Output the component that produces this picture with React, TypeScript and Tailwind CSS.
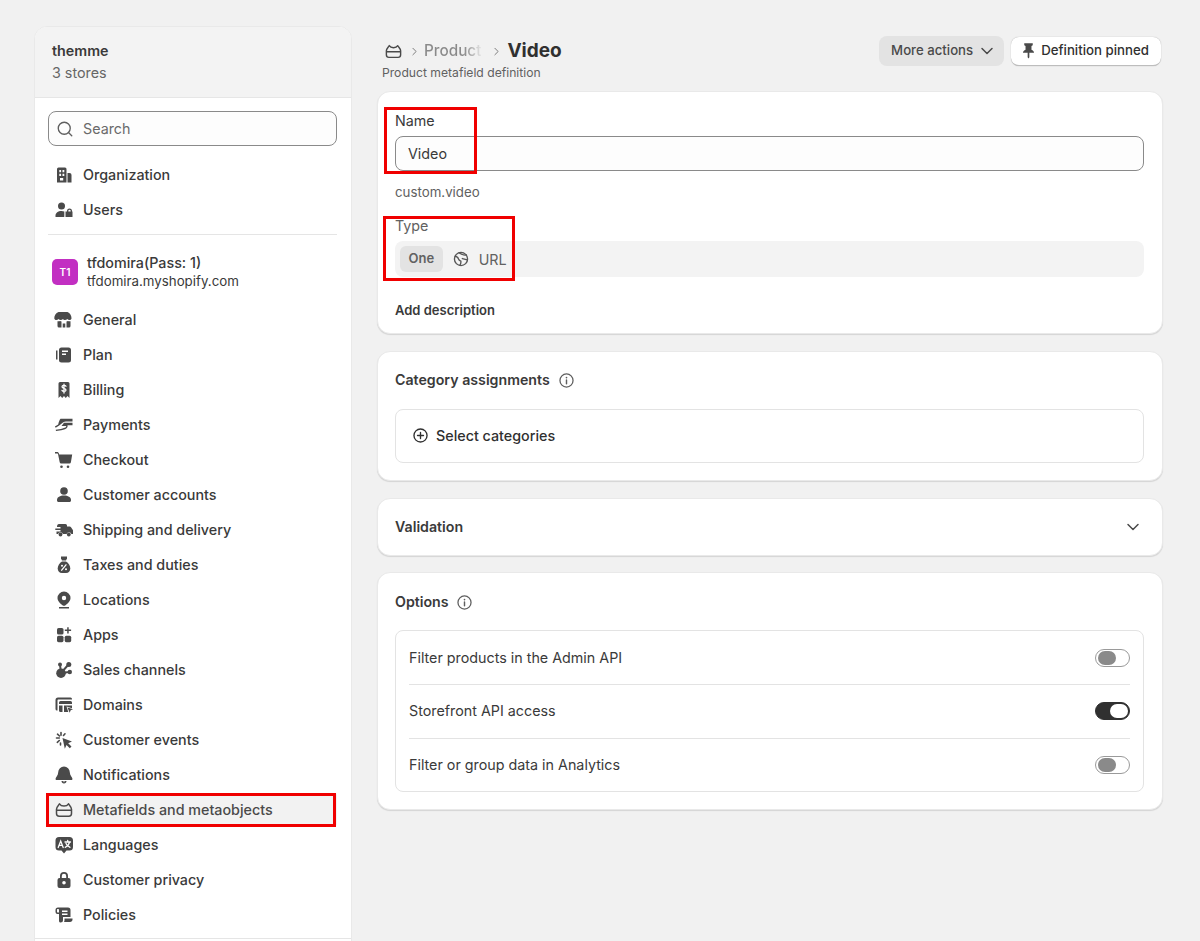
import type { ReactNode } from 'react'
import { ChevronDown, ChevronRight, Search } from 'lucide-react'

const Icon = ({ children, className = 'w-5 h-5 text-[#4a4a4a]' }: { children: ReactNode; className?: string }) => (
  <svg viewBox="0 0 20 20" fill="currentColor" className={className}>
    {children}
  </svg>
)

const MetafieldIcon = ({ className }: { className?: string }) => (
  <Icon className={className}>
    <path
      d="M5.500 3.800C5 5.300 2.500 6.800 2.500 9.300v4.200a2.700 2.700 0 0 0 2.700 2.700h9.600a2.700 2.700 0 0 0 2.700-2.700V9.300c0-2.500-2.500-4-3-5.500-1 1.600-2.500 2.200-4.500 2.200s-3.500-.6-4.500-2.200zM2.800 10.300h14.400"
      fill="none"
      stroke="currentColor"
      strokeWidth="1.500"
      strokeLinecap="round"
      strokeLinejoin="round"
    />
  </Icon>
)

const navTop = [
  {
    label: 'Organization',
    icon: (
      <Icon>
        <path
          fillRule="evenodd"
          d="M4.500 2.500h6.500A1.500 1.500 0 0 1 12.500 4v13.500H3V4A1.500 1.500 0 0 1 4.500 2.500M5.300 5v2.200h1.800V5zm3.200 0v2.200h1.800V5zM5.300 8.800V11h1.800V8.800zm3.200 0V11h1.800V8.800zM6 13v2.500h3.200V13z"
        />
        <path d="M13.500 8h2A2 2 0 0 1 17.500 10v7.500h-4z" />
      </Icon>
    ),
  },
  {
    label: 'Users',
    icon: (
      <Icon>
        <circle cx="7.500" cy="6" r="3.500" />
        <path d="M1.500 17v-1.500c0-2.500 2.500-4.500 6-4.500 1 0 2 .2 2.800.5V17z" />
        <path
          fillRule="evenodd"
          d="M13 11.500V11a2.500 2.500 0 0 1 5 0v.5h.5V17h-7v-5.500zm1.300 0h2.400V11a1.200 1.200 0 0 0-2.400 0z"
        />
      </Icon>
    ),
  },
]

const navMain = [
  {
    label: 'General',
    icon: (
      <Icon>
        <path d="M6.500 2h7c2.500 1 4 3.500 4 6.200 0 1.200-1 1.800-2 1.800s-1.700-.4-2.200-1c-.6.600-1.400 1-2.300 1s-1.700-.4-2-1c-.6.600-1.400 1-2.300 1s-1.700-.4-2.200-1c-.5.600-1.200 1-2.200 1s-2-.6-2-1.800c0-2.700 1.500-5.200 4.200-6.200" />
        <path d="M3.500 11.200c1 .3 2 .2 2.500-.2.500.3 1.200.5 1.500.5V17.500H5a1.500 1.500 0 0 1-1.500-1.500zM16.500 11.200V16A1.500 1.500 0 0 1 15 17.500h-2.500v-6c.3 0 1-.2 1.500-.5.500.4 1.500.5 2.500.2M8.700 13.500h2.600v4H8.700z" />
      </Icon>
    ),
  },
  {
    label: 'Plan',
    icon: (
      <Icon>
        <path d="M2 5.500h1.500v9H2z" />
        <path
          fillRule="evenodd"
          d="M7.500 2.500h7A2.500 2.500 0 0 1 17 5v10a2.500 2.500 0 0 1-2.500 2.500h-7A2.500 2.500 0 0 1 5 15V5A2.500 2.500 0 0 1 7.500 2.500M8 5.500V7h6V5.500zm0 3V10h4V8.500z"
        />
      </Icon>
    ),
  },
  {
    label: 'Billing',
    icon: (
      <Icon>
        <path
          fillRule="evenodd"
          d="M6 2h8A1.500 1.500 0 0 1 15.500 3.500v14.500l-2-2-1.700 2L10 16l-1.800 2-1.700-2-2 2V3.500A1.500 1.500 0 0 1 6 2"
        />
        <path
          d="M12 6.300c-.4-.7-1.100-1-2-1-1.200 0-2 .6-2 1.500 0 2 4 1.100 4 3.100 0 .9-.8 1.500-2 1.500-.9 0-1.700-.4-2-1M10 4.200v8.800"
          fill="none"
          stroke="#fff"
          strokeWidth="1.300"
          strokeLinecap="round"
        />
      </Icon>
    ),
  },
  {
    label: 'Payments',
    icon: (
      <Icon>
        <path d="M6.500 3.800h12V6.500H12c-1 0-2.200.3-3 1L5.200 10.500l-3.500 2.200-.8-1.100 3.300-2.200C4.700 7.500 5.500 5 6.500 3.800" />
        <path d="M10 7.800h8.500v2.500h-5c.5 1.600-.5 3.300-2.500 3.900l-3.700 1.100-5.300.700-.3-1.300 5.200-.8 3.800-1.100c1.200-.3 1.700-1 1.500-1.700H7.500z" />
      </Icon>
    ),
  },
  {
    label: 'Checkout',
    icon: (
      <Icon>
        <path d="M1 2H3c1 0 1.800.7 2 1.700l.2.800h13l-1.300 7.800a1.500 1.500 0 0 1-1.500 1.200H7.200a1.500 1.500 0 0 1-1.500-1.300L4 4c0-.3-.3-.5-.6-.5H1z" />
        <circle cx="7.500" cy="16.800" r="1.300" />
        <circle cx="14" cy="16.800" r="1.300" />
      </Icon>
    ),
  },
  {
    label: 'Customer accounts',
    icon: (
      <Icon>
        <circle cx="10" cy="6" r="3.800" />
        <path d="M3 15c0-2.800 3.100-4.500 7-4.500s7 1.700 7 4.500v.5c0 .8-.7 1.500-1.500 1.500h-11C3.700 17 3 16.300 3 15.500z" />
      </Icon>
    ),
  },
  {
    label: 'Shipping and delivery',
    icon: (
      <Icon>
        <path d="M5 4h6.500A1.500 1.500 0 0 1 13 5.500V6.500h2.700c.5 0 1 .3 1.300.7l1.700 2.500c.2.300.3.600.3.900V14h-1.600a2.500 2.500 0 0 0-4.800 0H8.900a2.500 2.500 0 0 0-4.800 0H2.500v-2.500h4V10H1.300V8.500h5.200V7H3c0-1.700.7-3 2-3" />
        <circle cx="6.500" cy="14.500" r="1.900" />
        <circle cx="14.800" cy="14.500" r="1.900" />
      </Icon>
    ),
  },
  {
    label: 'Taxes and duties',
    icon: (
      <Icon>
        <path d="M7 1.500h6v1.700l-1 2.300H8L7 3.200z" />
        <path
          fillRule="evenodd"
          d="M8 6.500h4c2.500 1.500 4.300 4.200 4.300 7 0 2.500-1.700 4.500-4.300 4.500H8c-2.600 0-4.300-2-4.300-4.500 0-2.800 1.800-5.500 4.300-7"
        />
        <path d="M12 9.800l-4.300 5.400" stroke="#fff" strokeWidth="1.300" strokeLinecap="round" />
        <circle cx="8" cy="10.800" r="1" fill="#fff" />
        <circle cx="12" cy="14.200" r="1" fill="#fff" />
      </Icon>
    ),
  },
  {
    label: 'Locations',
    icon: (
      <Icon>
        <path
          fillRule="evenodd"
          d="M10 1.500a6.500 6.500 0 0 1 6.500 6.500c0 3.200-2.900 5.800-5.300 7.500-.7.400-1.700.4-2.400 0C6.400 13.800 3.500 11.200 3.500 8A6.500 6.500 0 0 1 10 1.500m0 4.300a2.200 2.200 0 1 0 0 4.400 2.200 2.200 0 0 0 0-4.400"
        />
        <path d="M5 17h10v1.500H5z" />
      </Icon>
    ),
  },
  {
    label: 'Apps',
    icon: (
      <Icon>
        <rect x="3" y="3" width="6.500" height="6.500" rx="1.600" />
        <rect x="3" y="10.700" width="6.500" height="6.500" rx="1.600" />
        <rect x="10.700" y="10.700" width="6.500" height="6.500" rx="1.600" />
        <path d="M13.200 2.200h1.500v2.400h2.400v1.500h-2.400v2.400h-1.500V6.100h-2.400V4.600h2.400z" />
      </Icon>
    ),
  },
  {
    label: 'Sales channels',
    icon: (
      <Icon>
        <circle cx="7" cy="13.200" r="4.800" />
        <circle cx="14.800" cy="4.500" r="2.500" />
        <circle cx="6" cy="4.500" r="2" />
        <circle cx="15.800" cy="12" r="2.200" />
        <path d="M7 13L14.500 4.500M6 4.500L7 13M7 13l8.500-1" stroke="currentColor" strokeWidth="2" />
      </Icon>
    ),
  },
  {
    label: 'Domains',
    icon: (
      <Icon>
        <path d="M4 2.500h12.500A1.500 1.500 0 0 1 18 4v.5H4A1.500 1.500 0 0 0 3.500 5v10.500H3A1.500 1.500 0 0 1 1.500 14V5A2.500 2.500 0 0 1 4 2.500" />
        <path d="M6.500 6h10A1.500 1.500 0 0 1 18 7.500V9H5V7.500A1.500 1.500 0 0 1 6.500 6M5 10.500h3.500V17h-2A1.500 1.500 0 0 1 5 15.500zM10 10.500h8v2.800l-5.500-1.700 1.800 5.400H10z" />
        <path d="M13.500 12.500l5.500 1.800-2.300 1 -1 2.400z" />
      </Icon>
    ),
  },
  {
    label: 'Customer events',
    icon: (
      <Icon>
        <path d="M8.500 8l9.500 3.500-3.800 1.700 3.300 3.300-1.700 1.700-3.300-3.300-1.700 3.800z" />
        <path
          d="M7 2.500v2.800M2.500 8h2.800M3.500 4.200l2 1.800M11 3.800L9.500 5.500M3.300 12.300L5.300 10.500M6.500 13l0 2"
          fill="none"
          stroke="currentColor"
          strokeWidth="1.600"
          strokeLinecap="round"
        />
      </Icon>
    ),
  },
  {
    label: 'Notifications',
    icon: (
      <Icon>
        <path d="M10 1.500a5.800 5.800 0 0 1 5.800 5.800c0 3.200 2.700 5 2.700 6.700 0 .5-.5 1-1 1h-15c-.5 0-1-.5-1-1 0-1.700 2.700-3.500 2.700-6.700A5.800 5.800 0 0 1 10 1.500" />
        <path d="M7.500 16h5c0 1.500-1 2.500-2.500 2.500S7.500 17.500 7.500 16m1.300.6c.2.500.6.700 1.200.700s1-.2 1.200-.7z" fillRule="evenodd" />
      </Icon>
    ),
  },
]

const navBottom = [
  {
    label: 'Languages',
    icon: (
      <Icon>
        <path d="M5 2h10.500A3.500 3.500 0 0 1 19 5.500v6.500a3.500 3.500 0 0 1-3.500 3.500h-3l-2.500 3-2.500-3H5A3.500 3.500 0 0 1 1.500 12V5.500A3.500 3.500 0 0 1 5 2" />
        <path
          d="M4.200 12.500L6.700 6l2.500 6.500M5.100 10.300h3.200M11 7h5.500M13.700 5.500V7M15.500 7c-.4 2.300-2 4.300-4.300 5.300M12 8.500c.7 1.600 2.200 3 4 3.800"
          fill="none"
          stroke="#fff"
          strokeWidth="1.300"
          strokeLinecap="round"
        />
      </Icon>
    ),
  },
  {
    label: 'Customer privacy',
    icon: (
      <Icon>
        <path
          fillRule="evenodd"
          d="M6 8V6a4 4 0 0 1 8 0V8h.5A2 2 0 0 1 16.500 10v6a2 2 0 0 1-2 2h-9a2 2 0 0 1-2-2V10A2 2 0 0 1 5.500 8zm1.800 0h4.400V6a2.200 2.200 0 0 0-4.400 0zM10 11a1.800 1.800 0 1 0 0 3.600A1.800 1.800 0 0 0 10 11"
        />
      </Icon>
    ),
  },
  {
    label: 'Policies',
    icon: (
      <Icon>
        <path
          fillRule="evenodd"
          d="M4 2.500h10A2.500 2.500 0 0 1 16.500 5v7H9v3a2.500 2.500 0 0 1-2.500 2.500c-.8 0-1.500-.7-1.500-1.500V9H3.500A2 2 0 0 1 1.500 7V5A2.500 2.500 0 0 1 4 2.500M3.500 4a.800.800 0 0 0-.5.800V7c0 .300.200.500.500.500H5V4.800A.800.800 0 0 0 4.300 4zM8 5.500V7h5.500V5.500zm0 3V10h5.500V8.500z"
        />
        <path d="M10.500 13.500H18.500v1c0 1.500-1 2.500-2.500 2.500H10c.4-.6.500-1.300.5-2z" />
      </Icon>
    ),
  },
]

type NavRow = { label: string; icon: ReactNode }

function NavItem({ item }: { item: NavRow }) {
  return (
    <div className="h-[35px] flex items-center pl-[6px] gap-[9px] text-[14.3px] font-medium text-[#3a3a3a]">
      <span className="w-5 h-5 shrink-0">{item.icon}</span>
      <span>{item.label}</span>
    </div>
  )
}

function Toggle({ on = false }: { on?: boolean }) {
  if (on) {
    return (
      <div className="w-[35px] h-[18px] rounded-full bg-[#303030] border border-[#303030] flex items-center justify-end pr-[1px]">
        <div className="w-[18px] h-[14px] rounded-full bg-white" />
      </div>
    )
  }
  return (
    <div className="w-[35px] h-[18px] rounded-full bg-white border border-[#9a9a9a] flex items-center pl-[2px]">
      <div className="w-[18px] h-[14px] rounded-full bg-[#8a8a8a]" />
    </div>
  )
}

const InfoIcon = () => (
  <svg viewBox="0 0 20 20" className="w-[17px] h-[17px] text-[#5f5f5f]" fill="none" stroke="currentColor">
    <circle cx="10" cy="10" r="7.700" strokeWidth="1.500" />
    <path d="M10 9.300v4.500" strokeWidth="1.700" strokeLinecap="round" />
    <circle cx="10" cy="6.500" r="1" fill="currentColor" stroke="none" />
  </svg>
)

const cardClass = 'bg-white rounded-[13px] border border-[#e9e9e9] shadow-[0_1px_1px_rgba(0,0,0,0.12)]'

export default function App() {
  return (
    <div
      className="relative h-[941px] w-[1200px] overflow-hidden bg-[#f1f1f1] flex items-start pl-[34px] pt-[26px] text-[#303030]"
      style={{ fontFamily: 'Inter, sans-serif' }}
    >
      {/* Sidebar */}
      <aside className="w-[318px] shrink-0 bg-white rounded-t-[13px] border border-[#e9e9e9] overflow-hidden">
        <div className="h-[71px] bg-[#f3f3f3] border-b border-[#e6e6e6] pl-[17px] pt-[14px]">
          <div className="text-[14.3px] leading-[20px] font-semibold text-[#3a3a3a]">themme</div>
          <div className="text-[14.3px] leading-[20px] mt-[2px] text-[#666]">3 stores</div>
        </div>
        <div className="pl-[13px] pr-[14px] pt-[13px]">
          <div className="h-[35px] rounded-[8px] border border-[#8a8a8a] bg-[#fdfdfd] flex items-center pl-[7px] gap-[9px]">
            <Search className="w-[18px] h-[18px] text-[#5f5f5f]" strokeWidth={1.800} />
            <span className="text-[14.3px] text-[#6a6a6a]">Search</span>
          </div>
          <div className="mt-[11px]">
            {navTop.map((item) => (
              <NavItem key={item.label} item={item} />
            ))}
          </div>
          <div className="h-px bg-[#e5e5e5] mt-[7px]" />
          <div className="flex items-center h-[46px] mt-[14px] pl-[4px] gap-[9px]">
            <div className="w-[26px] h-[26px] rounded-[5px] bg-[#c22fc2] flex items-center justify-center text-[10px] font-semibold text-white">
              T1
            </div>
            <div>
              <div className="text-[14.3px] leading-[19px] font-medium text-[#3a3a3a]">tfdomira(Pass: 1)</div>
              <div className="text-[13.3px] leading-[19px] text-[#3a3a3a]">tfdomira.myshopify.com</div>
            </div>
          </div>
          <div className="mt-[7px]">
            {navMain.map((item) => (
              <NavItem key={item.label} item={item} />
            ))}
            <div className="h-[33px] my-[1px] bg-[#f2f2f2] rounded-[2px] flex items-center pl-[6px] gap-[9px] text-[14.3px] font-medium text-[#4a4a4a]">
              <MetafieldIcon className="w-5 h-5 text-[#4a4a4a]" />
              <span>Metafields and metaobjects</span>
            </div>
            {navBottom.map((item) => (
              <NavItem key={item.label} item={item} />
            ))}
          </div>
        </div>
        <div className="h-px bg-[#e5e5e5] mt-[6px]" />
        <div className="h-[20px]" />
      </aside>

      {/* Main column */}
      <main className="ml-[25px] w-[786px] shrink-0">
        <div className="h-[65px] flex items-start justify-between">
          <div>
            <div className="flex items-center h-[30px] mt-[10px] ml-[7px]">
              <MetafieldIcon className="w-[19px] h-[19px] text-[#4a4a4a]" />
              <ChevronRight className="w-[13px] h-[13px] ml-[5px] text-[#7a7a7a]" strokeWidth={1.800} />
              <span className="ml-[3px] text-[15.3px] font-medium text-transparent bg-linear-to-r from-[#8a8a8a] from-70% to-[#e4e4e4] bg-clip-text">
                Product
              </span>
              <ChevronRight className="w-[13px] h-[13px] ml-[9px] text-[#7a7a7a]" strokeWidth={1.800} />
              <span className="ml-[4px] text-[19px] font-bold text-[#303030]">Video</span>
            </div>
            <div className="-mt-[1px] text-[12.15px] leading-[16px] text-[#616161] ml-[5px]">Product metafield definition</div>
          </div>
          <div className="flex items-center gap-[7px] mt-[10px] mr-[2px]">
            <div className="h-[30px] rounded-[8px] bg-[#e3e3e3] flex items-center pl-[12px] pr-[7px] gap-[4px] text-[13.2px] font-medium text-[#4a4a4a]">
              More actions
              <ChevronDown className="w-[20px] h-[20px]" strokeWidth={1.800} />
            </div>
            <div className="h-[29px] rounded-[8px] bg-white border-b border-[#bdbdbd] shadow-[0_0_1px_rgba(0,0,0,0.35)] flex items-center pl-[9px] pr-[12px] gap-[4px] text-[13.25px] font-medium text-[#303030]">
              <Icon className="w-[17px] h-[17px] text-[#4a4a4a]">
                <path d="M5 1.500h10v2.300l-1.500 1v4.200c1.700.6 3 2 3 3.500H11v5.500l-1 1.300-1-1.300V12.500H3.500c0-1.500 1.300-2.900 3-3.500V4.800L5 3.800z" />
              </Icon>
              Definition pinned
            </div>
          </div>
        </div>

        {/* Name + type */}
        <section className={`${cardClass} h-[243px] pl-[17px] pr-[18px] pt-[19px]`}>
          <div className="text-[14.3px] leading-[20px] text-[#3a3a3a]">Name</div>
          <div className="mt-[5px] h-[35px] rounded-[8px] border border-[#8a8a8a] bg-[#fdfdfd] flex items-center pl-[12px] text-[14.3px] text-[#3a3a3a]">
            Video
          </div>
          <div className="mt-[11px] text-[13.3px] leading-[20px] text-[#616161]">custom.video</div>
          <div className="mt-[14px] text-[14.3px] leading-[20px] text-[#616161]">Type</div>
          <div className="mt-[5px] h-[36px] rounded-[8px] bg-[#f3f3f3] flex items-center pl-[5px]">
            <div className="h-[26px] px-[8.5px] rounded-[6px] bg-[#e3e3e3] flex items-center text-[13px] font-semibold text-[#616161]">
              One
            </div>
            <svg viewBox="0 0 20 20" className="w-[18px] h-[18px] ml-[9px] text-[#555]" fill="none" stroke="currentColor" strokeWidth="1.500">
              <circle cx="10" cy="10" r="7.300" />
              <path d="M3.500 7c2 .2 3.500 1.500 3.800 3 .3 1.300 1.500 2 2.500 2.300.3 1.300 0 2.800-1 4.700M16 5.500c-2 .3-3.500 0-4.500-.5-1.500-.7-2.500-1-3.500-2M11.500 9.500l5.500 1.500" strokeLinecap="round" />
            </svg>
            <span className="ml-[9px] mt-[1px] text-[14.3px] text-[#616161]">URL</span>
          </div>
          <div className="mt-[23px] text-[13px] leading-[20px] font-semibold text-[#3a3a3a]">Add description</div>
        </section>

        {/* Category assignments */}
        <section className={`${cardClass} mt-[17px] h-[130px] pl-[17px] pr-[18px] pt-[18px]`}>
          <div className="flex items-center gap-[8px] text-[14.2px] leading-[20px] font-semibold text-[#3a3a3a]">
            Category assignments
            <InfoIcon />
          </div>
          <div className="mt-[19px] h-[54px] pb-[1px] rounded-[8px] border border-[#e3e3e3] flex items-center pl-[16px] gap-[7px] text-[14.3px] font-medium text-[#303030]">
            <svg viewBox="0 0 20 20" className="w-[17px] h-[17px]" fill="none" stroke="currentColor" strokeWidth="1.600">
              <circle cx="10" cy="10" r="7.700" />
              <path d="M10 6.500v7M6.500 10h7" strokeLinecap="round" />
            </svg>
            Select categories
          </div>
        </section>

        {/* Validation */}
        <section className={`${cardClass} mt-[17px] h-[58px] pl-[17px] pr-[19px] flex items-center justify-between`}>
          <span className="text-[14.2px] font-semibold text-[#3a3a3a]">Validation</span>
          <ChevronDown className="w-[20px] h-[20px] text-[#4a4a4a]" strokeWidth={1.800} />
        </section>

        {/* Options */}
        <section className={`${cardClass} mt-[16px] h-[238px] pl-[17px] pr-[18px] pt-[19px]`}>
          <div className="flex items-center gap-[7px] text-[14.2px] leading-[20px] font-semibold text-[#3a3a3a]">
            Options
            <InfoIcon />
          </div>
          <div className="mt-[18px] rounded-[8px] border border-[#e3e3e3] px-[13px]">
            <div className="h-[54px] flex items-center justify-between text-[14.3px] text-[#3a3a3a] border-b border-[#e3e3e3]">
              Filter products in the Admin API
              <Toggle />
            </div>
            <div className="h-[54px] pb-[1px] flex items-center justify-between text-[14.3px] text-[#3a3a3a] border-b border-[#e3e3e3]">
              Storefront API access
              <Toggle on />
            </div>
            <div className="h-[52px] flex items-center justify-between text-[14.3px] text-[#3a3a3a]">
              Filter or group data in Analytics
              <Toggle />
            </div>
          </div>
        </section>
      </main>

      {/* Red annotation boxes */}
      <div className="absolute left-[46px] top-[793px] w-[290px] h-[34px] border-[3px] border-[#f00000]" />
      <div className="absolute left-[384px] top-[107px] w-[93px] h-[67px] border-[3px] border-[#f00000]" />
      <div className="absolute left-[383px] top-[216px] w-[132px] h-[65px] border-[3px] border-[#f00000]" />
    </div>
  )
}
